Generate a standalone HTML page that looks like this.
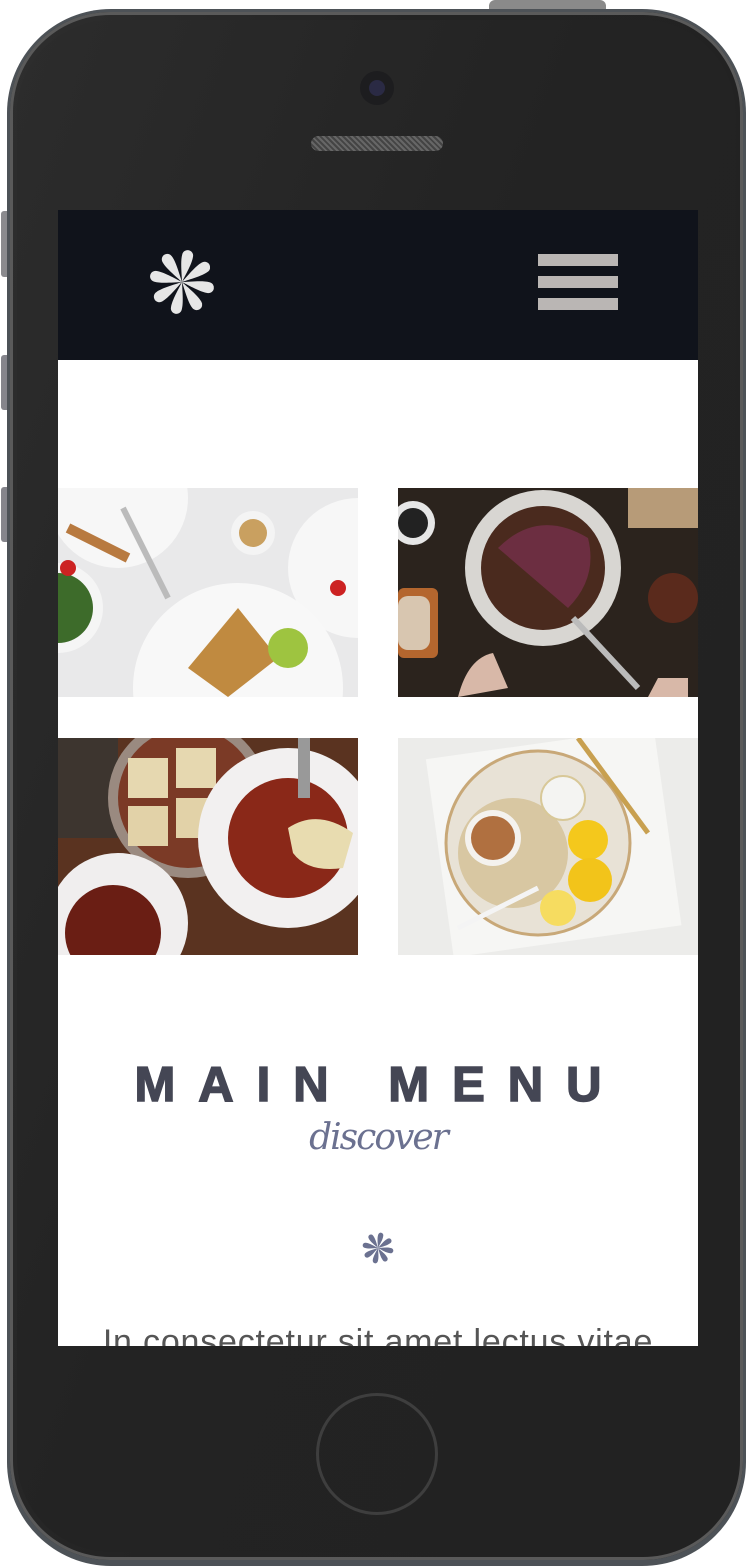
<!DOCTYPE html>
<html><head><meta charset="utf-8">
<style>
html,body{margin:0;padding:0;background:#fff;}
body{width:748px;height:1568px;position:relative;overflow:hidden;font-family:"Liberation Sans",sans-serif;}
.abs{position:absolute;}
</style></head><body>
<div class="abs" style="left:489px;top:0;width:117px;height:14px;background:#8a8a8a;border-radius:6px 6px 0 0;"></div>
<div class="abs" style="left:1px;top:211px;width:10px;height:66px;background:#8a8a8e;border-radius:3px;"></div>
<div class="abs" style="left:1px;top:355px;width:10px;height:55px;background:#85858c;border-radius:3px;"></div>
<div class="abs" style="left:1px;top:487px;width:10px;height:55px;background:#85858c;border-radius:3px;"></div>
<div class="abs" style="left:7px;top:9px;width:739px;height:1557px;border-radius:104px;background:#4d5257;"></div>
<div class="abs" style="left:10px;top:12px;width:733px;height:1548px;border-radius:100px;background:linear-gradient(100deg,#2e2e2e,#232323 40%,#222);box-shadow:inset 0 0 0 3px #5a5a5a;"></div>
<div class="abs" style="left:17px;top:20px;width:719px;height:1532px;border-radius:94px;background:linear-gradient(110deg,#2c2c2c,#232323 45%,#222);"></div>
<div class="abs" style="left:360px;top:71px;width:34px;height:34px;border-radius:50%;background:#1d1d1f;"></div>
<div class="abs" style="left:369px;top:80px;width:16px;height:16px;border-radius:50%;background:#2a2a44;"></div>
<div class="abs" style="left:311px;top:136px;width:132px;height:15px;border-radius:8px;background:repeating-linear-gradient(45deg,#444 0 2px,#666 2px 4px);"></div>
<div class="abs" style="left:316px;top:1393px;width:122px;height:122px;border-radius:50%;border:3px solid #3e3e3e;box-sizing:border-box;"></div>
<div class="abs" style="left:58px;top:210px;width:640px;height:1136px;background:#fff;overflow:hidden;">
  <div class="abs" style="left:0;top:0;width:640px;height:150px;background:#10131b;"></div>
  <svg class="abs" style="left:86px;top:34px" width="76" height="76" viewBox="-38 -38 76 76">
    <g fill="#e6e6e6" transform="rotate(12)">
      <path id="p" d="M0 0 C-2 -8 -6 -20 -5.5 -27 A5.5 5.5 0 0 1 5.5 -27 C6 -20 2 -8 0 0 Z"/>
      <use href="#p" transform="rotate(45)"/><use href="#p" transform="rotate(90)"/><use href="#p" transform="rotate(135)"/>
      <use href="#p" transform="rotate(180)"/><use href="#p" transform="rotate(225)"/><use href="#p" transform="rotate(270)"/><use href="#p" transform="rotate(315)"/>
    </g>
  </svg>
  <div class="abs" style="left:480px;top:44px;width:80px;height:12px;background:#bab6b4;"></div>
  <div class="abs" style="left:480px;top:66px;width:80px;height:12px;background:#bab6b4;"></div>
  <div class="abs" style="left:480px;top:88px;width:80px;height:12px;background:#bab6b4;"></div>

  <svg class="abs" style="left:0;top:278px" width="300" height="209">
    <rect width="300" height="209" fill="#e9e9ea"/>
    <circle cx="60" cy="10" r="70" fill="#f7f7f7"/>
    <circle cx="0" cy="120" r="45" fill="#f5f5f5"/><circle cx="0" cy="120" r="35" fill="#3d6b2a"/>
    <circle cx="300" cy="80" r="70" fill="#f7f7f7"/>
    <circle cx="180" cy="200" r="105" fill="#f8f8f8"/>
    <circle cx="195" cy="45" r="22" fill="#f4f4f4"/><circle cx="195" cy="45" r="14" fill="#c9a060"/>
    <path d="M130 180 L180 120 L220 170 L170 209 Z" fill="#c08a40"/>
    <circle cx="230" cy="160" r="20" fill="#9ec440"/>
    <path d="M10 40 L70 70" stroke="#b87a40" stroke-width="10"/>
    <path d="M65 20 L110 110" stroke="#bbb" stroke-width="6"/>
    <circle cx="10" cy="80" r="8" fill="#c22"/><circle cx="280" cy="100" r="8" fill="#c22"/>
  </svg>
  <svg class="abs" style="left:340px;top:278px" width="300" height="209">
    <rect width="300" height="209" fill="#2b231d"/>
    <circle cx="145" cy="80" r="78" fill="#d8d6d2"/>
    <circle cx="145" cy="80" r="62" fill="#4a2a1e"/>
    <path d="M100 60 Q140 20 190 50 Q200 90 170 120 Z" fill="#7a3050" opacity=".7"/>
    <circle cx="15" cy="35" r="22" fill="#e6e6e6"/><circle cx="15" cy="35" r="15" fill="#222"/>
    <rect x="0" y="100" width="40" height="70" rx="6" fill="#b4662e"/><rect x="0" y="108" width="32" height="54" rx="10" fill="#d8c6b0"/>
    <circle cx="275" cy="110" r="25" fill="#5a2a1c"/>
    <rect x="230" y="0" width="70" height="40" fill="#b79b78"/>
    <path d="M60 209 Q70 170 95 165 L110 200 Z" fill="#d8b8a8"/>
    <path d="M250 209 L260 190 L290 190 L290 209 Z" fill="#d8b8a8"/>
    <path d="M175 130 L240 200" stroke="#bbb" stroke-width="6"/>
  </svg>
  <svg class="abs" style="left:0;top:528px" width="300" height="217">
    <rect width="300" height="217" fill="#5a3320"/>
    <rect x="0" y="0" width="60" height="100" fill="#3d352f"/>
    <circle cx="130" cy="60" r="80" fill="#9a8a80"/><circle cx="130" cy="60" r="70" fill="#7b3a26"/>
    <rect x="70" y="20" width="40" height="40" fill="#e6d8b0"/><rect x="118" y="10" width="40" height="40" fill="#e6d8b0"/>
    <rect x="70" y="68" width="40" height="40" fill="#e2d2a8"/><rect x="118" y="60" width="40" height="40" fill="#e2d2a8"/>
    <circle cx="230" cy="100" r="90" fill="#f2f0f0"/>
    <circle cx="230" cy="100" r="60" fill="#8a2818"/>
    <path d="M230 90 Q260 70 295 95 L285 130 Q250 135 235 115 Z" fill="#e8dcb0"/>
    <circle cx="60" cy="185" r="70" fill="#f0eeee"/><circle cx="55" cy="195" r="48" fill="#6a1e14"/>
    <rect x="240" y="0" width="12" height="60" fill="#999"/>
  </svg>
  <svg class="abs" style="left:340px;top:528px" width="300" height="217">
    <rect width="300" height="217" fill="#ececea"/>
    <rect x="40" y="5" width="230" height="200" fill="#f6f6f4" transform="rotate(-8 150 100)"/>
    <circle cx="140" cy="105" r="92" fill="#e8e2d6" stroke="#c8a878" stroke-width="3"/>
    <circle cx="115" cy="115" r="55" fill="#d8c7a2"/>
    <circle cx="95" cy="100" r="28" fill="#f4f2ee"/><circle cx="95" cy="100" r="22" fill="#b07040"/>
    <circle cx="165" cy="60" r="22" fill="#f4f4f2" stroke="#d8c898" stroke-width="2"/>
    <circle cx="190" cy="102" r="20" fill="#f4c81c"/>
    <circle cx="192" cy="142" r="22" fill="#f2c41a"/>
    <circle cx="160" cy="170" r="18" fill="#f6dc60"/>
    <path d="M180 0 L250 95" stroke="#c8a050" stroke-width="5"/>
    <path d="M60 190 L140 150" stroke="#f4f4f4" stroke-width="5"/>
  </svg>

  <div class="abs" style="left:-10px;top:848px;width:640px;text-align:center;font-weight:900;font-size:49px;color:#444654;letter-spacing:23px;line-height:54px;padding-left:23px;box-sizing:border-box;-webkit-text-stroke:1.5px #444654;">MAIN MENU</div>
  <div class="abs" style="left:0;top:906px;width:640px;text-align:center;font-family:'DejaVu Serif',cursive;font-style:italic;font-size:36px;color:#6b7190;line-height:44px;letter-spacing:-2px;">discover</div>
  <svg class="abs" style="left:302px;top:1020px" width="36" height="36" viewBox="-18 -18 36 36">
    <g fill="#6b7190" transform="rotate(12)">
      <path id="q" d="M0 0 C-1 -4 -3 -9 -2.6 -13 A2.6 2.6 0 0 1 2.6 -13 C3 -9 1 -4 0 0 Z"/>
      <use href="#q" transform="rotate(45)"/><use href="#q" transform="rotate(90)"/><use href="#q" transform="rotate(135)"/>
      <use href="#q" transform="rotate(180)"/><use href="#q" transform="rotate(225)"/><use href="#q" transform="rotate(270)"/><use href="#q" transform="rotate(315)"/>
    </g>
  </svg>
  <div class="abs" style="left:-30px;top:1112px;width:700px;text-align:center;font-size:34px;color:#555;line-height:40px;letter-spacing:0.8px;">In consectetur sit amet lectus vitae</div>
</div>
</body></html>
